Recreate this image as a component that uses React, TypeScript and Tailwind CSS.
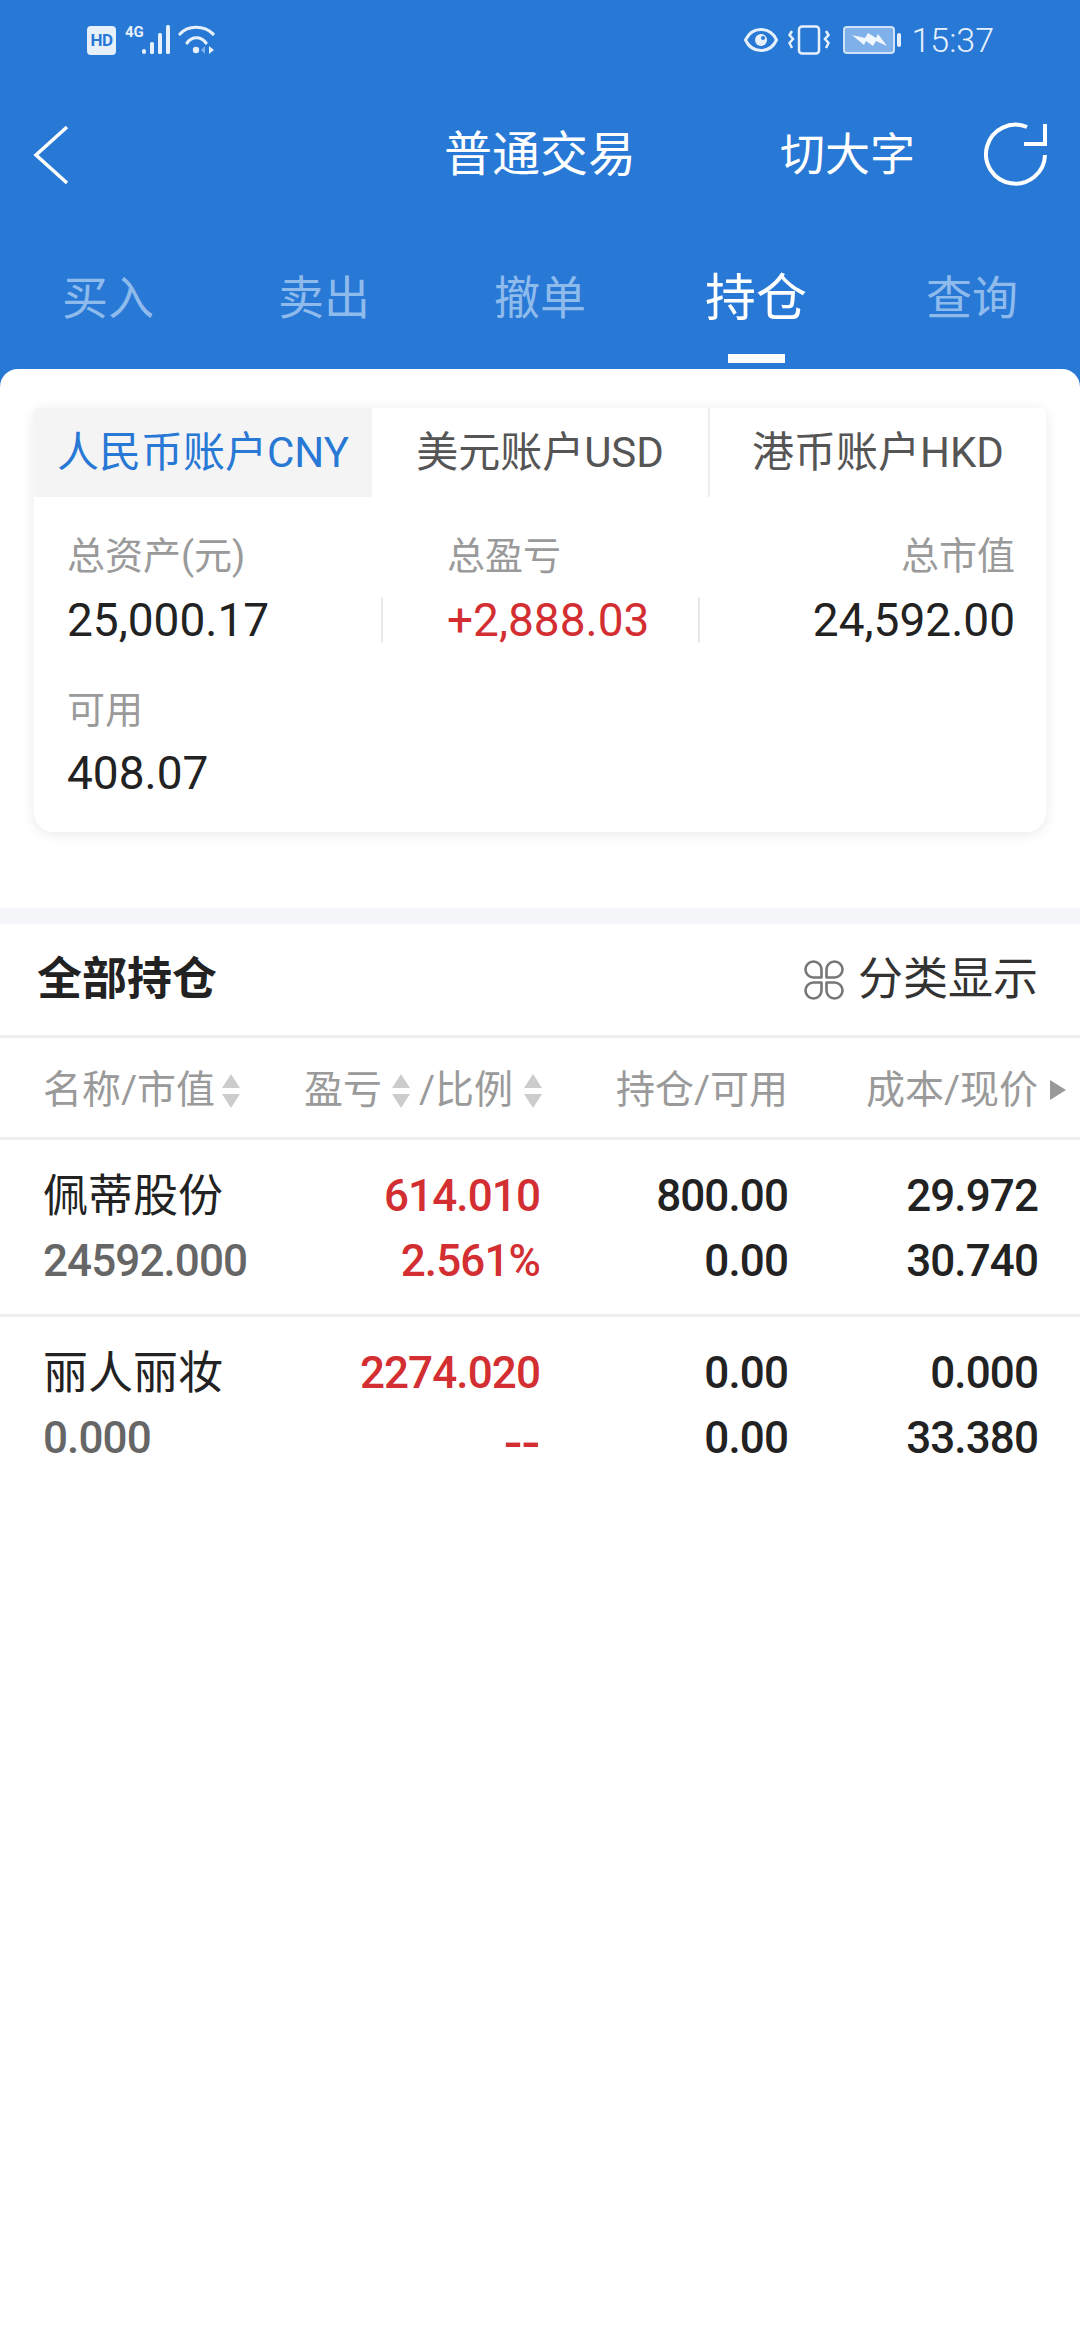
const font = "font-['Roboto','Noto_Sans_CJK_SC',sans-serif]";

const rows = [
  { name: "佩蒂股份", value: "24592.000", pl: "614.010", ratio: "2.561%", hold: "800.00", avail: "0.00", cost: "29.972", price: "30.740" },
  { name: "丽人丽妆", value: "0.000", pl: "2274.020", ratio: "--", hold: "0.00", avail: "0.00", cost: "0.000", price: "33.380" },
];

function SortIcon() {
  return (
    <svg width="20" height="36" viewBox="0 0 20 36" className="shrink-0">
      <path d="M10 1 L19 15 H1 Z" fill="#cccccc" />
      <path d="M10 35 L19 21 H1 Z" fill="#cccccc" />
    </svg>
  );
}

function StatusLeft() {
  return (
    <div className="flex items-center">
      <div className="w-[29px] h-[29px] rounded-[4px] bg-[#e6f0fb] flex items-center justify-center text-[#2878d6] text-[17px] leading-none font-bold tracking-[-0.5px]">
        HD
      </div>
      <svg width="52" height="32" viewBox="0 0 52 32" className="ml-[9px] text-[#e6f0fb]">
        <text x="0" y="13" fontSize="15" fontWeight="700" fill="currentColor" fontFamily="Roboto">4G</text>
        <rect x="17" y="25" width="4" height="5" rx="2" fill="currentColor" />
        <rect x="25" y="18" width="4" height="12" rx="1.5" fill="currentColor" />
        <rect x="33" y="9" width="4" height="21" rx="1.5" fill="currentColor" />
        <rect x="41" y="1" width="4" height="29" rx="1.5" fill="currentColor" />
      </svg>
      <svg width="38" height="30" viewBox="0 0 38 30" className="ml-[1px]" fill="none" stroke="#e6f0fb" strokeWidth="3.2" strokeLinecap="round">
        <path d="M2 9 C10 0 26 0 35 9" />
        <path d="M9 18 C14 11 23 11 28 18" />
        <circle cx="18" cy="25" r="3.2" fill="#e6f0fb" stroke="none" />
        <path d="M27 21 V29 L23 25 Z" fill="#7fb0ea" stroke="none" />
        <path d="M31 21 V29 L36 25 Z" fill="#e6f0fb" stroke="none" />
      </svg>
    </div>
  );
}

function StatusRight() {
  return (
    <div className="flex items-center">
      <svg width="34" height="26" viewBox="0 0 34 26" fill="none" stroke="#e6f0fb" strokeWidth="3">
        <path d="M1.5 13 C8 -1 26 -1 32.5 13 C26 27 8 27 1.5 13 Z" />
        <circle cx="17" cy="13" r="6" fill="#e6f0fb" stroke="none" />
        <circle cx="19" cy="11" r="2" fill="#2878d6" stroke="none" />
      </svg>
      <svg width="42" height="30" viewBox="0 0 42 30" className="ml-[10px]" fill="none" stroke="#e6f0fb" strokeWidth="2.5">
        <rect x="11" y="1.5" width="20" height="27" rx="3" />
        <path d="M4 6 L1.5 10 L5 14 L1.5 18 L4 23" />
        <path d="M38 6 L40.5 10 L37 14 L40.5 18 L38 23" />
      </svg>
      <svg width="58" height="28" viewBox="0 0 58 28" className="ml-[13px]">
        <rect x="1" y="1" width="50" height="26" rx="3" fill="#7fb0ea" stroke="#cfe2f8" strokeWidth="2" />
        <path d="M9 9 L22 12 L25 7 L33 12 L35 8 L44 20 L33 15 L30 20 L23 15 L21 19 Z" fill="#f0f6fd" />
        <rect x="54" y="7" width="4" height="14" rx="2" fill="#e6f0fb" />
      </svg>
      <span className="ml-[10px] text-[34px] leading-none text-[#e6f0fb] font-light">15:37</span>
    </div>
  );
}

export default function App() {
  return (
    <div className={`w-[1080px] min-h-[2340px] bg-white ${font}`}>
      {/* 顶部 */}
      <div className="bg-[#2878d6] h-[387px]">
        <div className="h-[80px] pl-[87px] pr-[86px] flex items-center justify-between">
          <StatusLeft />
          <StatusRight />
        </div>
        <div className="h-[76px] mt-[37px] grid grid-cols-[1fr_auto_1fr] items-center">
          <div className="pl-[32px] flex items-center">
            <svg width="38" height="60" viewBox="0 0 38 60" fill="none" stroke="white" strokeWidth="3.5">
              <path d="M35 2 L4 30 L35 58" />
            </svg>
          </div>
          <div className="text-[48px] leading-none text-white">普通交易</div>
          <div className="flex items-center justify-end pr-[31px]">
            <span className="text-[45px] leading-none text-white">切大字</span>
            <svg width="66" height="66" viewBox="0 0 66 66" className="ml-[68px]" fill="none" stroke="white" strokeWidth="4">
              <path d="M44 5 A29.5 29.5 0 1 0 62 33" />
              <path d="M62 2 V22 H41" />
            </svg>
          </div>
        </div>
        <div className="grid grid-cols-5 mt-[83px]">
          {["买入", "卖出", "撤单", "持仓", "查询"].map((t) => {
            const active = t === "持仓";
            return (
              <div key={t} className="flex flex-col items-center">
                {active ? (
                  <>
                    <span className="text-[51px] leading-[50px] mt-[-2px] text-white">{t}</span>
                    <div className="w-[57px] h-[9px] bg-white mt-[30px]" />
                  </>
                ) : (
                  <span className="text-[46px] leading-[45px] text-[#8fbbec]">{t}</span>
                )}
              </div>
            );
          })}
        </div>
      </div>

      {/* 账户卡片 */}
      <div className="relative bg-white rounded-t-[18px] mt-[-18px] pt-[39px] px-[34px] h-[539px]">
        <div className="h-[424px] rounded-b-[20px] rounded-t-[6px] bg-white shadow-[0_2px_14px_rgba(0,0,0,0.09)]">
          <div className="grid grid-cols-[338px_338px_1fr] h-[89px]">
            <div className="bg-[#f4f4f5] text-[#2878d6] text-[42px] flex items-center justify-center rounded-tl-[6px]">人民币账户CNY</div>
            <div className="border-r-2 border-[#eeeeee] text-[#555555] text-[42px] flex items-center justify-center">美元账户USD</div>
            <div className="text-[#555555] text-[42px] flex items-center justify-center">港币账户HKD</div>
          </div>
          <div className="grid grid-cols-[347px_317px_1fr] pr-[31px] pt-[34px]">
            <div className="pl-[33px]">
              <div className="text-[38px] leading-[50px] text-[#9a9a9a]">总资产(元)</div>
              <div className="text-[46px] leading-[46px] mt-[16px] text-[#222222]">25,000.17</div>
            </div>
            <div>
              <div className="text-[38px] leading-[50px] text-[#9a9a9a] pl-[66px]">总盈亏</div>
              <div className="text-[46px] leading-[46px] mt-[16px] text-[#d32f32] border-l-2 border-[#e8e8e8] pl-[64px]">+2,888.03</div>
            </div>
            <div className="text-right">
              <div className="text-[38px] leading-[50px] text-[#9a9a9a]">总市值</div>
              <div className="text-[46px] leading-[46px] mt-[16px] text-[#222222] border-l-2 border-[#e8e8e8]">24,592.00</div>
            </div>
          </div>
          <div className="pl-[33px] pt-[42px]">
            <div className="text-[38px] leading-[50px] text-[#9a9a9a]">可用</div>
            <div className="text-[46px] leading-[46px] mt-[15px] text-[#222222]">408.07</div>
          </div>
        </div>
      </div>
      <div className="h-[16px] bg-[#f5f7fa]" />

      {/* 全部持仓 */}
      <div className="h-[114px] pl-[37px] pr-[42px] flex items-center justify-between border-b-[3px] border-[#eeeeee]">
        <span className="text-[45px] font-bold text-[#222222]">全部持仓</span>
        <div className="flex items-center">
          <svg width="40" height="40" viewBox="0 0 40 40" fill="none" stroke="#777777" strokeWidth="2.6" strokeLinejoin="round">
            <path d="M17.5 17.5 H9.5 A8 8 0 1 1 17.5 9.5 Z" />
            <path d="M22.5 17.5 H30.5 A8 8 0 1 0 22.5 9.5 Z" />
            <path d="M17.5 22.5 H9.5 A8 8 0 1 0 17.5 30.5 Z" />
            <path d="M22.5 22.5 H30.5 A8 8 0 1 1 22.5 30.5 Z" />
          </svg>
          <span className="ml-[14px] text-[45px] text-[#333333]">分类显示</span>
        </div>
      </div>

      {/* 表头 */}
      <div className="h-[102px] pl-[43px] pr-[42px] pt-[6px] grid grid-cols-[263px_234px_248px_250px] items-center border-b-[3px] border-[#eeeeee] text-[39px] text-[#9a9a9a] whitespace-nowrap">
        <div className="flex items-center">
          名称/市值
          <span className="ml-[6px]"><SortIcon /></span>
        </div>
        <div className="flex items-center justify-end mr-[-3px]">
          盈亏
          <span className="ml-[9px]"><SortIcon /></span>
          <span className="ml-[8px]">/比例</span>
          <span className="ml-[10px]"><SortIcon /></span>
        </div>
        <div className="text-right">持仓/可用</div>
        <div className="relative text-right">
          成本/现价
          <svg width="16" height="20" viewBox="0 0 16 20" className="absolute right-[-28px] top-[19px]">
            <path d="M0 0 L16 10 L0 20 Z" fill="#999999" />
          </svg>
        </div>
      </div>

      {/* 持仓列表 */}
      {rows.map((r, i) => (
        <div
          key={r.name}
          className={`pl-[43px] pr-[42px] grid grid-cols-[263px_234px_248px_250px] content-start text-[44px] leading-[65px] tracking-[-0.9px] font-medium ${i === 0 ? "h-[177px] pt-[24px] border-b-[3px] border-[#eeeeee]" : "h-[130px] pt-[24px]"}`}
        >
          <div className="text-[#222222] tracking-normal font-normal text-[45px]">{r.name}</div>
          <div className="text-right text-[#d32f32]">{r.pl}</div>
          <div className="text-right text-[#222222]">{r.hold}</div>
          <div className="text-right text-[#222222]">{r.cost}</div>
          <div className="text-[#666666]">{r.value}</div>
          <div className="text-right text-[#d32f32]">
            {r.ratio === "--" ? <span className="inline-block text-[60px] font-normal tracking-[1px] translate-y-[4px]">--</span> : r.ratio}
          </div>
          <div className="text-right text-[#222222]">{r.avail}</div>
          <div className="text-right text-[#222222]">{r.price}</div>
        </div>
      ))}
    </div>
  );
}
